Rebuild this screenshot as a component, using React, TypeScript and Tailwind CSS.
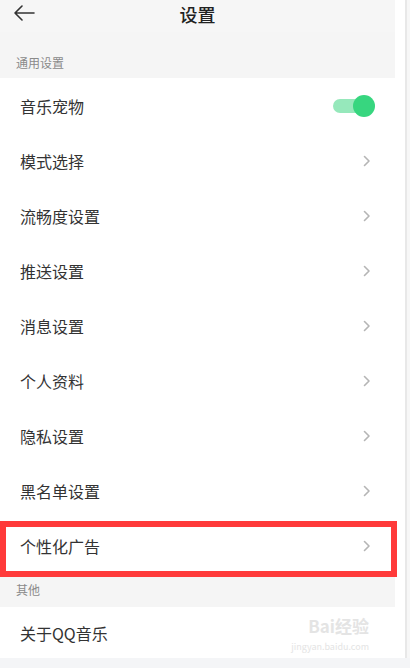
const font = {
  fontFamily: '"Noto Sans CJK SC", "Noto Sans", sans-serif',
};

const rows = [
  "模式选择",
  "流畅度设置",
  "推送设置",
  "消息设置",
  "个人资料",
  "隐私设置",
  "黑名单设置",
];

function Chevron() {
  return (
    <svg width="8" height="12" viewBox="0 0 8 12" className="mr-[24px]">
      <polyline
        points="1.5,1.5 6,6 1.5,10.5"
        fill="none"
        stroke="#b5b5b5"
        strokeWidth="1.6"
        strokeLinecap="round"
        strokeLinejoin="round"
      />
    </svg>
  );
}

function Row({ label }: { label: string }) {
  return (
    <div className="flex h-[55px] items-center justify-between bg-white pl-5">
      <span className="text-[16px] text-[#333]">{label}</span>
      <Chevron />
    </div>
  );
}

export default function App() {
  return (
    <div className="flex h-[668px] w-[410px] flex-col overflow-hidden bg-[#f4f5f7]" style={font}>
      <div className="flex h-[658px] bg-white">
        {/* phone screenshot */}
        <div className="flex w-[395px] flex-col">
          <header className="relative flex h-[32px] items-center justify-center bg-[#f6f6f6] pb-[4px]">
            <svg
              width="22"
              height="16"
              viewBox="0 0 22 16"
              className="absolute left-[13px] top-[5px]"
            >
              <path
                d="M21 8H2M9 1L2 8l7 7"
                fill="none"
                stroke="#333"
                strokeWidth="1.6"
                strokeLinecap="round"
                strokeLinejoin="round"
              />
            </svg>
            <span className="text-[18px] font-medium leading-none text-[#222]">设置</span>
          </header>

          <div className="flex h-[46px] items-end bg-[#f5f5f5] pb-[6px] pl-4">
            <span className="text-[12px] text-[#8a8a8a]">通用设置</span>
          </div>

          <div className="flex h-[55px] items-center justify-between bg-white pl-5">
            <span className="text-[16px] text-[#333]">音乐宠物</span>
            <div className="relative mr-[20px] h-[22px] w-[42px]">
              <div className="absolute left-0 top-[4px] h-[14px] w-[30px] rounded-full bg-[#96e8bb]" />
              <div className="absolute right-0 top-0 h-[22px] w-[22px] rounded-full bg-[#37d67f]" />
            </div>
          </div>

          {rows.map((r) => (
            <Row key={r} label={r} />
          ))}

          <div className="relative">
            <Row label="个性化广告" />
            <div className="absolute left-0 top-[3px] h-[56px] w-[397px] border-[6px] border-[#ff3a3a]" />
          </div>

          <div className="flex h-[34px] items-center bg-[#f5f5f5] pl-4">
            <span className="text-[12px] text-[#8a8a8a]">其他</span>
          </div>

          <div className="relative flex h-[51px] items-center bg-white pl-5">
            <span className="text-[16px] text-[#333]">关于QQ音乐</span>
            <div className="absolute right-[26px] top-[10px] flex flex-col items-end gap-[8px] text-[#e4e4e4]">
              <span className="text-[17px] font-bold leading-[17px]">Bai经验</span>
              <span className="text-[9px] leading-[9px]">jingyan.baidu.com</span>
            </div>
          </div>
        </div>
        <div className="w-[10px] bg-white" />
        <div className="w-[2px] bg-[#e8e8e8]" />
        <div className="flex-1 bg-[#f7f7f7]" />
      </div>
    </div>
  );
}
